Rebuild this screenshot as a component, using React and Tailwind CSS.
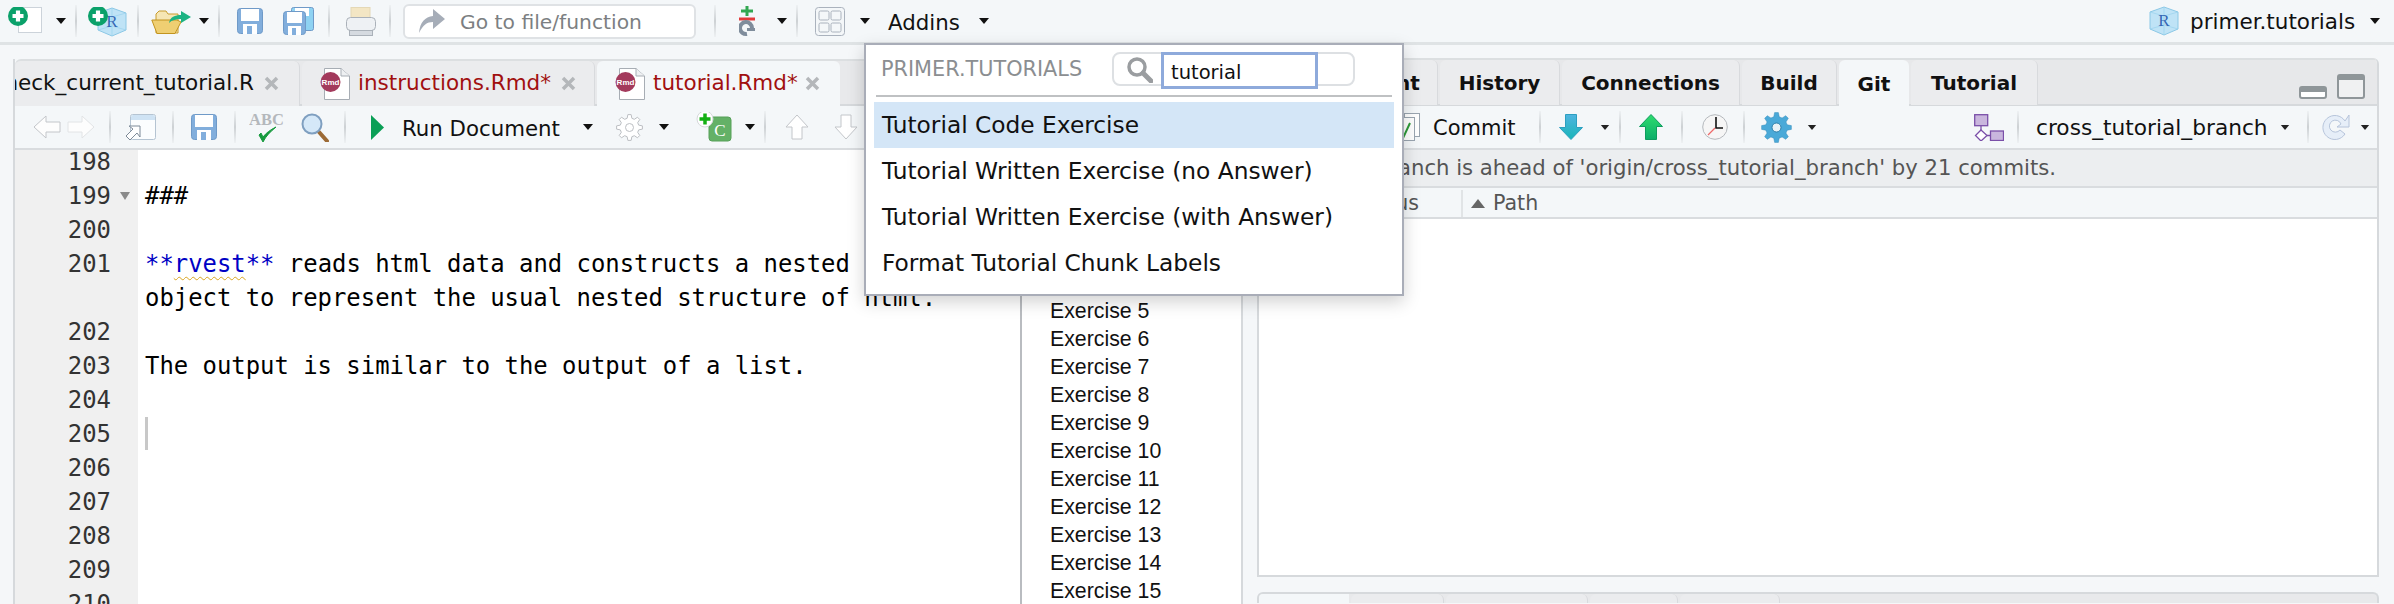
import React from 'react';

const SANS = { fontFamily: '"DejaVu Sans", sans-serif' };

// builds a cog outline for the two gear icons
function gearPath(cx, cy, rOut, rIn, teeth) {
  const pts = [];
  const step = (Math.PI * 2) / teeth;
  for (let i = 0; i < teeth; i++) {
    const a = i * step - Math.PI / 2;
    const w = step * 0.2;
    pts.push([cx + rIn * Math.cos(a - w * 1.6), cy + rIn * Math.sin(a - w * 1.6)]);
    pts.push([cx + rOut * Math.cos(a - w * 0.8), cy + rOut * Math.sin(a - w * 0.8)]);
    pts.push([cx + rOut * Math.cos(a + w * 0.8), cy + rOut * Math.sin(a + w * 0.8)]);
    pts.push([cx + rIn * Math.cos(a + w * 1.6), cy + rIn * Math.sin(a + w * 1.6)]);
  }
  return 'M' + pts.map((p) => p[0].toFixed(2) + ' ' + p[1].toFixed(2)).join('L') + 'Z';
}

function Caret({ className = '', small = false }) {
  return (
    <svg className={'shrink-0 ' + className} width="10" height={small ? 5 : 6} viewBox="0 0 10 6">
      <path d="M0 0H10L5 6Z" fill={small ? '#222' : '#111'} />
    </svg>
  );
}

function Divider({ className = '' }) {
  return <div className={'w-[2px] h-[32px] shrink-0 bg-linear-to-b from-[#eef1f3] via-[#cdd1d4] to-[#eef1f3] ' + className} />;
}

function PlusDot({ cx, cy, r = 10 }) {
  return (
    <g>
      <circle cx={cx} cy={cy} r={r} fill="#0ba16a" />
      <path d={`M${cx - r * 0.55} ${cy}H${cx + r * 0.55}M${cx} ${cy - r * 0.55}V${cy + r * 0.55}`} stroke="#fff" strokeWidth={r * 0.42} />
    </g>
  );
}

function NewFileIcon({ className }) {
  return (
    <svg className={'shrink-0 ' + className} width="34" height="28" viewBox="0 0 34 28">
      <rect x="10.5" y="0.5" width="23" height="25" fill="#fff" stroke="#ccd3da" />
      <PlusDot cx={10} cy={9} />
    </svg>
  );
}

function RCube({ size = 30, className = '' }) {
  return (
    <svg className={'shrink-0 ' + className} width={size} height={size} viewBox="0 0 30 30">
      <path d="M15 1L29 6V23L15 29L1 23V6Z" fill="#bfe3f6" stroke="#8cc8e6" />
      <path d="M1 6L15 10L29 6M15 10V29M1 23L15 19L29 23M15 1V19" fill="none" stroke="#9ad2ee" strokeWidth="0.7" />
      <text x="15" y="20" textAnchor="middle" fontSize="17" fill="#3568b5" fontFamily='"Liberation Serif", serif'>R</text>
    </svg>
  );
}

function NewProjectIcon({ className }) {
  return (
    <div className={'relative shrink-0 w-[39px] h-[28px] ' + className}>
      <RCube size={30} className="absolute left-[9px] top-0" />
      <svg className="absolute left-0 top-0" width="22" height="22" viewBox="0 0 22 22"><PlusDot cx={10} cy={9} /></svg>
    </div>
  );
}

function FolderIcon({ className }) {
  return (
    <svg className={'shrink-0 ' + className} width="40" height="27" viewBox="0 0 40 27">
      <path d="M5 25V6L8 3H15L17 6H27V25Z" fill="#f6e6b4" stroke="#c89c2e" />
      <path d="M0.8 12H26L30 14L24 25.5H6Z" fill="#efcf72" stroke="#c2941f" />
      <path d="M18 15C19 9 24 7 30 7V3L40 9L30 15V11C25 11 21 12 18 15Z" fill="#1cb383" />
    </svg>
  );
}

function FloppyIcon({ className = '' }) {
  return (
    <svg className={'shrink-0 ' + className} width="26" height="26" viewBox="0 0 26 26">
      <rect x="0.5" y="0.5" width="25" height="25" rx="3" fill="#82aedc" stroke="#6f9ac8" />
      <rect x="4" y="1" width="18" height="12" fill="#fff" />
      <rect x="6" y="16" width="14" height="10" fill="#fff" />
      <rect x="10" y="18" width="5" height="8" fill="#82aedc" />
    </svg>
  );
}

function SaveAllIcon({ className }) {
  return (
    <svg className={'shrink-0 ' + className} width="31" height="28" viewBox="0 0 31 28">
      <rect x="8.5" y="0.5" width="22" height="23" rx="2" fill="#8ed2f2" stroke="#6f9ac8" />
      <rect x="12" y="1" width="14" height="8" fill="#fff" />
      <rect x="0.5" y="4.5" width="22" height="23" rx="3" fill="#82aedc" stroke="#6f9ac8" />
      <rect x="4" y="5" width="15" height="11" fill="#fff" />
      <rect x="5" y="19" width="13" height="9" fill="#fff" />
      <rect x="9" y="21" width="4" height="7" fill="#82aedc" />
    </svg>
  );
}

function PrinterIcon({ className }) {
  return (
    <svg className={'shrink-0 ' + className} width="30" height="29" viewBox="0 0 30 29">
      <rect x="5" y="0.5" width="19" height="16" fill="#f3e6c4" stroke="#e4d8b6" />
      <rect x="0.5" y="10.5" width="29" height="13" rx="4" fill="#eef1f4" stroke="#aab1b9" />
      <rect x="3.5" y="23.5" width="23" height="5" fill="#d5dae0" stroke="#aab1b9" />
    </svg>
  );
}

function GoToIcon() {
  return (
    <svg className="shrink-0 ml-[14px]" width="26" height="24" viewBox="0 0 26 24">
      <path d="M0 24C1 13 6 8 14 7V0L26 10L14 20V13C8 13 4 16 0 24Z" fill="#a6adb8" />
    </svg>
  );
}

function GitIcon({ className }) {
  return (
    <svg className={'shrink-0 ' + className} width="16" height="31" viewBox="0 0 16 31">
      <path d="M8 0V10M2 5H14" stroke="#32a852" strokeWidth="3" />
      <path d="M0 13H16" stroke="#e23a3a" strokeWidth="3" />
      <path d="M13 22A6 6 0 1 0 8 28" fill="none" stroke="#7f8d9c" strokeWidth="4" />
      <path d="M8 22H16V25H8Z" fill="#7f8d9c" />
    </svg>
  );
}

function GridIcon({ className }) {
  return (
    <svg className={'shrink-0 ' + className} width="30" height="29" viewBox="0 0 30 29" fill="none" stroke="#aab2bd">
      <rect x="0.5" y="0.5" width="29" height="28" rx="3" />
      <rect x="4" y="4" width="10" height="9" rx="1.5" />
      <rect x="16" y="4" width="10" height="9" rx="1.5" />
      <rect x="4" y="16" width="10" height="9" rx="1.5" />
      <rect x="16" y="16" width="10" height="9" rx="1.5" />
    </svg>
  );
}

function BackArrow({ className, flip = false, stroke }) {
  return (
    <svg className={'shrink-0 ' + className} width="28" height="24" viewBox="0 0 28 24">
      <path d={flip ? 'M27 12L15 1V7H1V17H15V23Z' : 'M1 12L13 1V7H27V17H13V23Z'} fill="#fdfdfd" stroke={stroke} />
    </svg>
  );
}

function PopoutIcon({ className }) {
  return (
    <svg className={'shrink-0 ' + className} width="30" height="26" viewBox="0 0 30 26">
      <rect x="4.5" y="0.5" width="25" height="25" rx="2" fill="#fbfdfe" stroke="#b5c4d2" />
      <path d="M5 3a2 2 0 0 1 2-2H27a2 2 0 0 1 2 2V6H5Z" fill="#cfe3f4" />
      <path d="M0 22L7 15L3 12H14V23L11 19L4 26Z" fill="#fff" stroke="#7d8a98" />
    </svg>
  );
}

function SpellIcon({ className }) {
  return (
    <svg className={'shrink-0 ' + className} width="35" height="31" viewBox="0 0 35 31">
      <text x="17.5" y="13" textAnchor="middle" fontSize="16.5" fontWeight="700" fill="#b4b8bc" fontFamily='"Liberation Serif", serif'>ABC</text>
      <path d="M10 23L14 30C17 24 21 20 27 15C21 18 17 21 14 25L12 21Z" fill="#159a3d" stroke="#159a3d" />
    </svg>
  );
}

function MagnifierIcon({ className }) {
  return (
    <svg className={'shrink-0 ' + className} width="28" height="29" viewBox="0 0 28 29">
      <path d="M18 19L26 28" stroke="#9c6a35" strokeWidth="4" strokeLinecap="round" />
      <circle cx="11" cy="11" r="9.5" fill="#d5e8f8" stroke="#7f9fc0" strokeWidth="2" />
    </svg>
  );
}

function OutlineGear({ className }) {
  return (
    <svg className={'shrink-0 ' + className} width="27" height="27" viewBox="0 0 27 27" fill="#fff" stroke="#bcbfc3">
      <path d={gearPath(13.5, 13.5, 13, 9.5, 8)} />
      <circle cx="13.5" cy="13.5" r="4" />
    </svg>
  );
}

function ChunkIcon({ className }) {
  return (
    <svg className={'shrink-0 ' + className} width="36" height="30" viewBox="0 0 36 30">
      <rect x="13" y="5" width="22" height="24" rx="3" fill="#64b167" stroke="#56a059" />
      <text x="24" y="24" textAnchor="middle" fontSize="17" fill="#fff" fontFamily='"Liberation Serif", serif'>C</text>
      <circle cx="9" cy="7" r="8" fill="#fff" stroke="#d5d8da" />
      <path d="M3.5 7H14.5M9 1.5V12.5" stroke="#14b014" strokeWidth="3.5" />
    </svg>
  );
}

function HollowArrow({ className, down = false }) {
  return (
    <svg className={'shrink-0 ' + className} width="24" height="26" viewBox="0 0 24 26">
      <path d={down ? 'M12 25L1 13H7V1H17V13H23Z' : 'M12 1L23 13H17V25H7V13H1Z'} fill="#fff" stroke="#c3c6ca" />
    </svg>
  );
}

function CommitIcon() {
  return (
    <svg className="shrink-0 ml-[139px]" width="22" height="28" viewBox="0 0 22 28">
      <rect x="6.5" y="0.5" width="15" height="23" fill="#fff" stroke="#9aa5b0" />
      <rect x="0.5" y="4.5" width="16" height="23" fill="#fff" stroke="#9aa5b0" />
      <path d="M4 19L6 23L12 10" fill="none" stroke="#2f9a3a" strokeWidth="2" />
    </svg>
  );
}

function ColorArrow({ className, down = false, from, to, stroke, id }) {
  return (
    <svg className={'shrink-0 ' + className} width="24" height="26" viewBox="0 0 24 26">
      <defs>
        <linearGradient id={id} x1="0" y1="0" x2="0" y2="1">
          <stop offset="0" stopColor={from} />
          <stop offset="1" stopColor={to} />
        </linearGradient>
      </defs>
      <path d={down ? 'M12 25.5L.5 13.5H6.5V.5H17.5V13.5H23.5Z' : 'M12 .5L23.5 12.5H17.5V25.5H6.5V12.5H.5Z'} fill={`url(#${id})`} stroke={stroke} />
    </svg>
  );
}

function ClockIcon({ className }) {
  return (
    <svg className={'shrink-0 ' + className} width="26" height="26" viewBox="0 0 26 26">
      <circle cx="13" cy="13" r="12.3" fill="#f6f6f6" stroke="#b5b9bd" />
      <path d="M14 3V14H21" fill="none" stroke="#111" strokeWidth="1.6" />
      <path d="M13 14L6 21" stroke="#ee6a6a" strokeWidth="1.2" />
    </svg>
  );
}

function BlueGear({ className }) {
  return (
    <svg className={'shrink-0 ' + className} width="31" height="31" viewBox="0 0 31 31">
      <path d={gearPath(15.5, 15.5, 15, 11, 8)} fill="#4aa9d8" stroke="#3b8fbd" strokeWidth="0.5" />
      <circle cx="15.5" cy="15.5" r="4.5" fill="#e9f2f6" stroke="#2f7fa8" />
    </svg>
  );
}

function BranchIcon({ className }) {
  return (
    <svg className={'shrink-0 ' + className} width="30" height="27" viewBox="0 0 30 27" stroke="#7a4fa8" strokeWidth="1.3">
      <rect x="0.7" y="0.7" width="13" height="11" fill="#c9b6dd" />
      <path d="M7 12V16" fill="none" />
      <path d="M7 16L13 21.5L7 27L1.5 21.5Z" fill="#fff" />
      <path d="M13 21.5H16" fill="none" />
      <rect x="16.5" y="17" width="13" height="9.5" fill="#c9b6dd" />
    </svg>
  );
}

function RefreshIcon({ className }) {
  return (
    <svg className={'shrink-0 ' + className} width="29" height="30" viewBox="0 0 29 30">
      <path d="M24 9A12 12 0 1 0 24 22L19 18A6 6 0 1 1 20 12L16 15H28V3Z" fill="#e6eef8" stroke="#b6c4da" />
    </svg>
  );
}

function RmdIcon() {
  return (
    <svg className="shrink-0" width="30" height="32" viewBox="0 0 30 32">
      <path d="M4.5 .5H21L29.5 8V31.5H4.5Z" fill="#fff" stroke="#a7adb4" />
      <path d="M21 .5V8H29.5" fill="#eef0f2" stroke="#a7adb4" />
      <circle cx="10.5" cy="14" r="10" fill="#a33a5c" />
      <text x="10.5" y="17" textAnchor="middle" fontSize="8" fontWeight="700" fill="#fff" fontFamily='"Liberation Sans", sans-serif'>Rmd</text>
    </svg>
  );
}

function CloseX() {
  return (
    <svg className="shrink-0" width="15" height="15" viewBox="0 0 15 15">
      <path d="M2 2L13 13M13 2L2 13" stroke="#b4b7ba" strokeWidth="3.5" />
    </svg>
  );
}

function TopBar() {
  return (
    <div className="h-[45px] shrink-0 flex items-center border-b-[3px] border-[#dfe3e5] bg-[#f4f7f9]">
      <NewFileIcon className="ml-[8px]" />
      <Caret className="ml-[14px]" />
      <Divider className="ml-[9px]" />
      <NewProjectIcon className="ml-[11px]" />
      <Divider className="ml-[10px]" />
      <FolderIcon className="ml-[12px]" />
      <Caret className="ml-[8px]" />
      <Divider className="ml-[9px]" />
      <FloppyIcon className="ml-[17px]" />
      <SaveAllIcon className="ml-[20px]" />
      <Divider className="ml-[14px]" />
      <PrinterIcon className="ml-[16px]" />
      <Divider className="ml-[13px]" />
      <div className="ml-[12px] w-[293px] h-[35px] shrink-0 flex items-center bg-white border-2 border-[#dfe2e5] rounded-md">
        <GoToIcon />
        <span className="ml-[15px] pt-[2px] text-[20.3px] text-[#7c7f82] whitespace-nowrap">Go to file/function</span>
      </div>
      <Divider className="ml-[18px]" />
      <GitIcon className="ml-[23px]" />
      <Caret className="ml-[22px]" />
      <Divider className="ml-[9px]" />
      <GridIcon className="ml-[17px]" />
      <Caret className="ml-[15px]" />
      <span className="ml-[18px] pt-[3px] w-[73px] shrink-0 text-[21.3px] text-[#111] whitespace-nowrap">Addins</span>
      <Caret className="ml-[18px]" />
      <RCube size={30} className="ml-auto" />
      <span className="ml-[11px] pt-[3px] w-[165px] shrink-0 text-[21.5px] text-[#111] whitespace-nowrap">primer.tutorials</span>
      <Caret className="ml-[15px] mr-[14px]" />
    </div>
  );
}

function SourceTabs() {
  return (
    <div className="h-[47px] shrink-0 flex gap-[2px] bg-[#e8e9eb] border-b-2 border-[#d6d9dc] border-t-2 border-t-[#dcdfe1] rounded-tl-md">
      <div className="w-[285px] h-[45px] shrink-0 flex items-center justify-end pr-[20px] gap-[10px] overflow-hidden bg-[#ebecee] border-r border-[#d8dadd] rounded-t-md">
        <span className="text-[21.5px] text-[#111] whitespace-nowrap">check_current_tutorial.R</span>
        <CloseX />
      </div>
      <div className="w-[293px] h-[45px] shrink-0 flex items-center pl-[18px] bg-[#ebecee] border-r border-[#d8dadd] rounded-t-md">
        <RmdIcon />
        <span className="ml-[8px] w-[192px] shrink-0 text-[21.5px] text-[#a11010] whitespace-nowrap">instructions.Rmd*</span>
        <span className="ml-[11px]"><CloseX /></span>
      </div>
      <div className="w-[243px] h-[47px] shrink-0 flex items-center pb-[2px] pl-[18px] bg-[#f4f7f9] rounded-t-md">
        <RmdIcon />
        <span className="ml-[8px] w-[142px] shrink-0 text-[21.5px] text-[#a11010] whitespace-nowrap">tutorial.Rmd*</span>
        <span className="ml-[10px]"><CloseX /></span>
      </div>
    </div>
  );
}

function EditorToolbar() {
  return (
    <div className="h-[44px] shrink-0 flex items-center bg-[#f4f7f9] border-b-2 border-[#d9dcdf]">
      <BackArrow className="ml-[18px]" stroke="#c3c6ca" />
      <BackArrow className="ml-[6px]" flip stroke="#e2e4e6" />
      <Divider className="ml-[14px]" />
      <PopoutIcon className="ml-[15px]" />
      <Divider className="ml-[16px]" />
      <FloppyIcon className="ml-[17px]" />
      <Divider className="ml-[17px]" />
      <SpellIcon className="ml-[13px]" />
      <MagnifierIcon className="ml-[17px]" />
      <Divider className="ml-[15px]" />
      <svg className="shrink-0 ml-[25px]" width="13" height="25" viewBox="0 0 13 25"><path d="M0 0L13 12.5L0 25Z" fill="#0a9f56" /></svg>
      <span className="ml-[18px] pt-[3px] w-[157px] shrink-0 text-[21.3px] text-[#111] whitespace-nowrap">Run Document</span>
      <Caret className="ml-[24px]" />
      <OutlineGear className="ml-[23px]" />
      <Caret className="ml-[16px]" />
      <ChunkIcon className="ml-[27px]" />
      <Caret className="ml-[13px]" />
      <Divider className="ml-[9px]" />
      <HollowArrow className="ml-[19px]" />
      <HollowArrow className="ml-[25px]" down />
    </div>
  );
}

const MONO = 'font-["DejaVu_Sans_Mono",monospace] text-[23.9px]';

function CodeRow({ num, fold = false, children }) {
  return (
    <div className="flex h-[34px]">
      <div className={'w-[123px] shrink-0 relative bg-[#f0f0f0] text-right pr-[27px] leading-[34px] text-[#333] ' + MONO}>
        {num}
        {fold && (
          <svg className="absolute left-[105px] top-[13px]" width="10" height="8" viewBox="0 0 10 8"><path d="M0 0H10L5 8Z" fill="#8a8a8a" /></svg>
        )}
      </div>
      <div className={'pl-[7px] leading-[34px] whitespace-pre text-black ' + MONO}>{children}</div>
    </div>
  );
}

function CodeEditor() {
  return (
    <div className="w-[1005px] shrink-0 h-full overflow-hidden bg-white">
      <div className="-mt-[5px]">
        <CodeRow num="198" />
        <CodeRow num="199" fold>###</CodeRow>
        <CodeRow num="200" />
        <CodeRow num="201">
          <span className="text-[#0000c4]">**<span className="underline decoration-wavy decoration-[#d9a520] decoration-1 underline-offset-4">rvest</span>**</span> reads html data and constructs a nested
        </CodeRow>
        <CodeRow num="">object to represent the usual nested structure of html.</CodeRow>
        <CodeRow num="202" />
        <CodeRow num="203">The output is similar to the output of a list.</CodeRow>
        <CodeRow num="204" />
        <CodeRow num="205">
          <div className="w-[3px] h-[33px] bg-[#c8c8c8]" />
        </CodeRow>
        <CodeRow num="206" />
        <CodeRow num="207" />
        <CodeRow num="208" />
        <CodeRow num="209" />
        <CodeRow num="210" />
      </div>
    </div>
  );
}

function OutlinePanel() {
  const items = [];
  for (let i = 5; i <= 16; i++) items.push('Exercise ' + i);
  return (
    <div className="flex-1 h-full overflow-hidden bg-white border-l-2 border-[#b9bcc0] pt-[147px] pl-[28px] font-['Liberation_Sans',sans-serif] text-[21.3px] text-[#111]">
      {items.map((label) => (
        <div key={label} className="h-[28px] leading-[28px] whitespace-nowrap">{label}</div>
      ))}
    </div>
  );
}

function SourcePane() {
  return (
    <div className="w-[1230px] h-full shrink-0 flex flex-col overflow-hidden border-l-2 border-r-2 border-[#d6d9dc]">
      <SourceTabs />
      <EditorToolbar />
      <div className="flex-1 flex min-h-0">
        <CodeEditor />
        <OutlinePanel />
      </div>
    </div>
  );
}

function PaneTab({ w, active = false, children }) {
  return (
    <div
      style={{ width: w }}
      className={
        'shrink-0 flex items-center justify-center rounded-t-md text-[20px] font-bold text-[#111] whitespace-nowrap ' +
        (active ? 'h-[47px] bg-[#f4f7f9]' : 'h-[45px] bg-[#ebecee] border-r border-[#d8dadd]')
      }
    >
      {children}
    </div>
  );
}

function GitPane() {
  return (
    <div className="h-[519px] shrink-0 flex flex-col border-l-2 border-r-2 border-b-2 border-[#d6d9dc] overflow-hidden rounded-t-md">
      <div className="h-[48px] shrink-0 flex items-start gap-[2px] bg-[#e7e8ea] border-t-2 border-[#dcdfe1] border-b-2 border-b-[#d6d9dc]">
        <PaneTab w={179}>Environment</PaneTab>
        <PaneTab w={120}>History</PaneTab>
        <PaneTab w={178}>Connections</PaneTab>
        <PaneTab w={95}>Build</PaneTab>
        <PaneTab w={70} active>Git</PaneTab>
        <PaneTab w={127}>Tutorial</PaneTab>
        <svg className="shrink-0 ml-[259px] mt-[26px]" width="28" height="13" viewBox="0 0 28 13">
          <rect x="1" y="1" width="26" height="11" rx="2" fill="#fff" stroke="#8f9699" strokeWidth="2" />
          <path d="M1 3a2 2 0 0 1 2-2H25a2 2 0 0 1 2 2V6H1Z" fill="#8f9699" />
        </svg>
        <svg className="shrink-0 ml-[8px] mt-[14px]" width="28" height="25" viewBox="0 0 28 25">
          <rect x="1" y="1" width="26" height="23" rx="2" fill="#f0f1f2" stroke="#8f9699" strokeWidth="2" />
          <path d="M1 3a2 2 0 0 1 2-2H25a2 2 0 0 1 2 2V6H1Z" fill="#8f9699" />
        </svg>
      </div>
      <div className="h-[44px] shrink-0 flex items-center bg-[#f4f7f9] border-b-2 border-[#d9dcdf]">
        <CommitIcon />
        <span className="ml-[13px] pt-[3px] w-[84px] shrink-0 text-[21px] text-[#111] whitespace-nowrap">Commit</span>
        <Divider className="ml-[22px]" />
        <ColorArrow className="ml-[18px]" down id="pull" from="#4fb4e0" to="#18b5b8" stroke="#2c9fc0" />
        <Caret small className="ml-[17px]" />
        <Divider className="ml-[9px]" />
        <ColorArrow className="ml-[18px]" id="push" from="#2fdc6e" to="#0cae6a" stroke="#0e9c5e" />
        <Divider className="ml-[18px]" />
        <ClockIcon className="ml-[19px]" />
        <Divider className="ml-[15px]" />
        <BlueGear className="ml-[16px]" />
        <Caret small className="ml-[15px]" />
        <BranchIcon className="ml-[157px]" />
        <Divider className="ml-[13px]" />
        <span className="ml-[17px] pt-[3px] w-[230px] shrink-0 text-[21.7px] text-[#111] whitespace-nowrap">cross_tutorial_branch</span>
        <Caret small className="ml-[14px]" />
        <Divider className="ml-[17px]" />
        <RefreshIcon className="ml-[12px]" />
        <Caret small className="ml-[10px]" />
      </div>
      <div className="h-[38px] shrink-0 flex items-center justify-end pr-[321px] bg-[#eceef0] border-b-2 border-[#d9dcdf] text-[21.2px] text-[#555] whitespace-nowrap">
        Your branch is ahead of 'origin/cross_tutorial_branch' by 21 commits.
      </div>
      <div className="h-[31px] shrink-0 flex items-center pt-[2px] bg-[#f4f7f9] border-b-2 border-[#d9dcdf] text-[20.6px] text-[#555]">
        <div className="w-[204px] h-full shrink-0 flex items-center justify-end pr-[42px] border-r-2 border-[#e1e4e6]">Status</div>
        <svg className="shrink-0 ml-[8px]" width="14" height="9" viewBox="0 0 14 9"><path d="M0 9H14L7 0Z" fill="#666" /></svg>
        <span className="ml-[8px]">Path</span>
      </div>
      <div className="flex-1 bg-white" />
    </div>
  );
}

function LowerPane() {
  return (
    <div className="mt-[15px] flex-1 flex gap-[2px] bg-[#e8e9eb] border-l-2 border-r-2 border-t-2 border-[#d6d9dc] rounded-t-md overflow-hidden">
      <div className="w-[90px] bg-[#f4f7f9]" />
      <div className="w-[93px] bg-[#ebecee] border-r border-[#d8dadd] rounded-t-md" />
      <div className="w-[142px] bg-[#ebecee] border-r border-[#d8dadd] rounded-t-md" />
      <div className="w-[88px] bg-[#ebecee] border-r border-[#d8dadd] rounded-t-md" />
      <div className="w-[100px] bg-[#ebecee] border-r border-[#d8dadd] rounded-t-md" />
    </div>
  );
}

function AddinsPopup() {
  const rows = [
    'Tutorial Code Exercise',
    'Tutorial Written Exercise (no Answer)',
    'Tutorial Written Exercise (with Answer)',
    'Format Tutorial Chunk Labels',
  ];
  return (
    <div className="absolute left-[864px] top-[43px] w-[540px] h-[253px] bg-white border-2 border-[#a9adb8] shadow-[0_6px_16px_rgba(0,0,0,0.18)]">
      <div className="h-[50px] mx-[10px] flex items-center border-b-2 border-[#bfc1c3] box-content">
        <span className="ml-[5px] w-[231px] shrink-0 text-[20.8px] text-[#8b8e91] whitespace-nowrap">PRIMER.TUTORIALS</span>
        <div className="w-[243px] h-[34px] -mt-[3px] shrink-0 flex items-start border-2 border-[#dde0e3] rounded-lg">
          <svg className="shrink-0 ml-[13px] mt-[3px]" width="26" height="26" viewBox="0 0 26 26" fill="none" stroke="#9a9da0">
            <circle cx="10" cy="10" r="8" strokeWidth="3.5" />
            <path d="M16 16L24 24" strokeWidth="5" strokeLinecap="round" />
          </svg>
          <div className="ml-[8px] -mt-[2px] w-[157px] h-[37px] shrink-0 bg-white border-[3px] border-[#8eaadb] pl-[7px] leading-[35px] text-[19.5px] text-[#111]">tutorial</div>
        </div>
      </div>
      <div className="mt-[5px] mx-[8px]">
        {rows.map((label, i) => (
          <div key={label} className={'h-[46px] pl-[8px] flex items-center text-[23.3px] text-[#111] whitespace-nowrap ' + (i === 0 ? 'bg-[#d4e6f7]' : '')}>
            {label}
          </div>
        ))}
      </div>
    </div>
  );
}

export default function App() {
  return (
    <div style={SANS} className="relative w-[2394px] h-[604px] overflow-hidden flex flex-col bg-[#f5f7f9]">
      <TopBar />
      <div className="flex-1 min-h-0 flex pl-[13px] pr-[15px] pt-[14px]">
        <SourcePane />
        <div className="ml-[14px] flex-1 min-w-0 h-full flex flex-col -mt-[1px]">
          <GitPane />
          <LowerPane />
        </div>
      </div>
      <AddinsPopup />
    </div>
  );
}
